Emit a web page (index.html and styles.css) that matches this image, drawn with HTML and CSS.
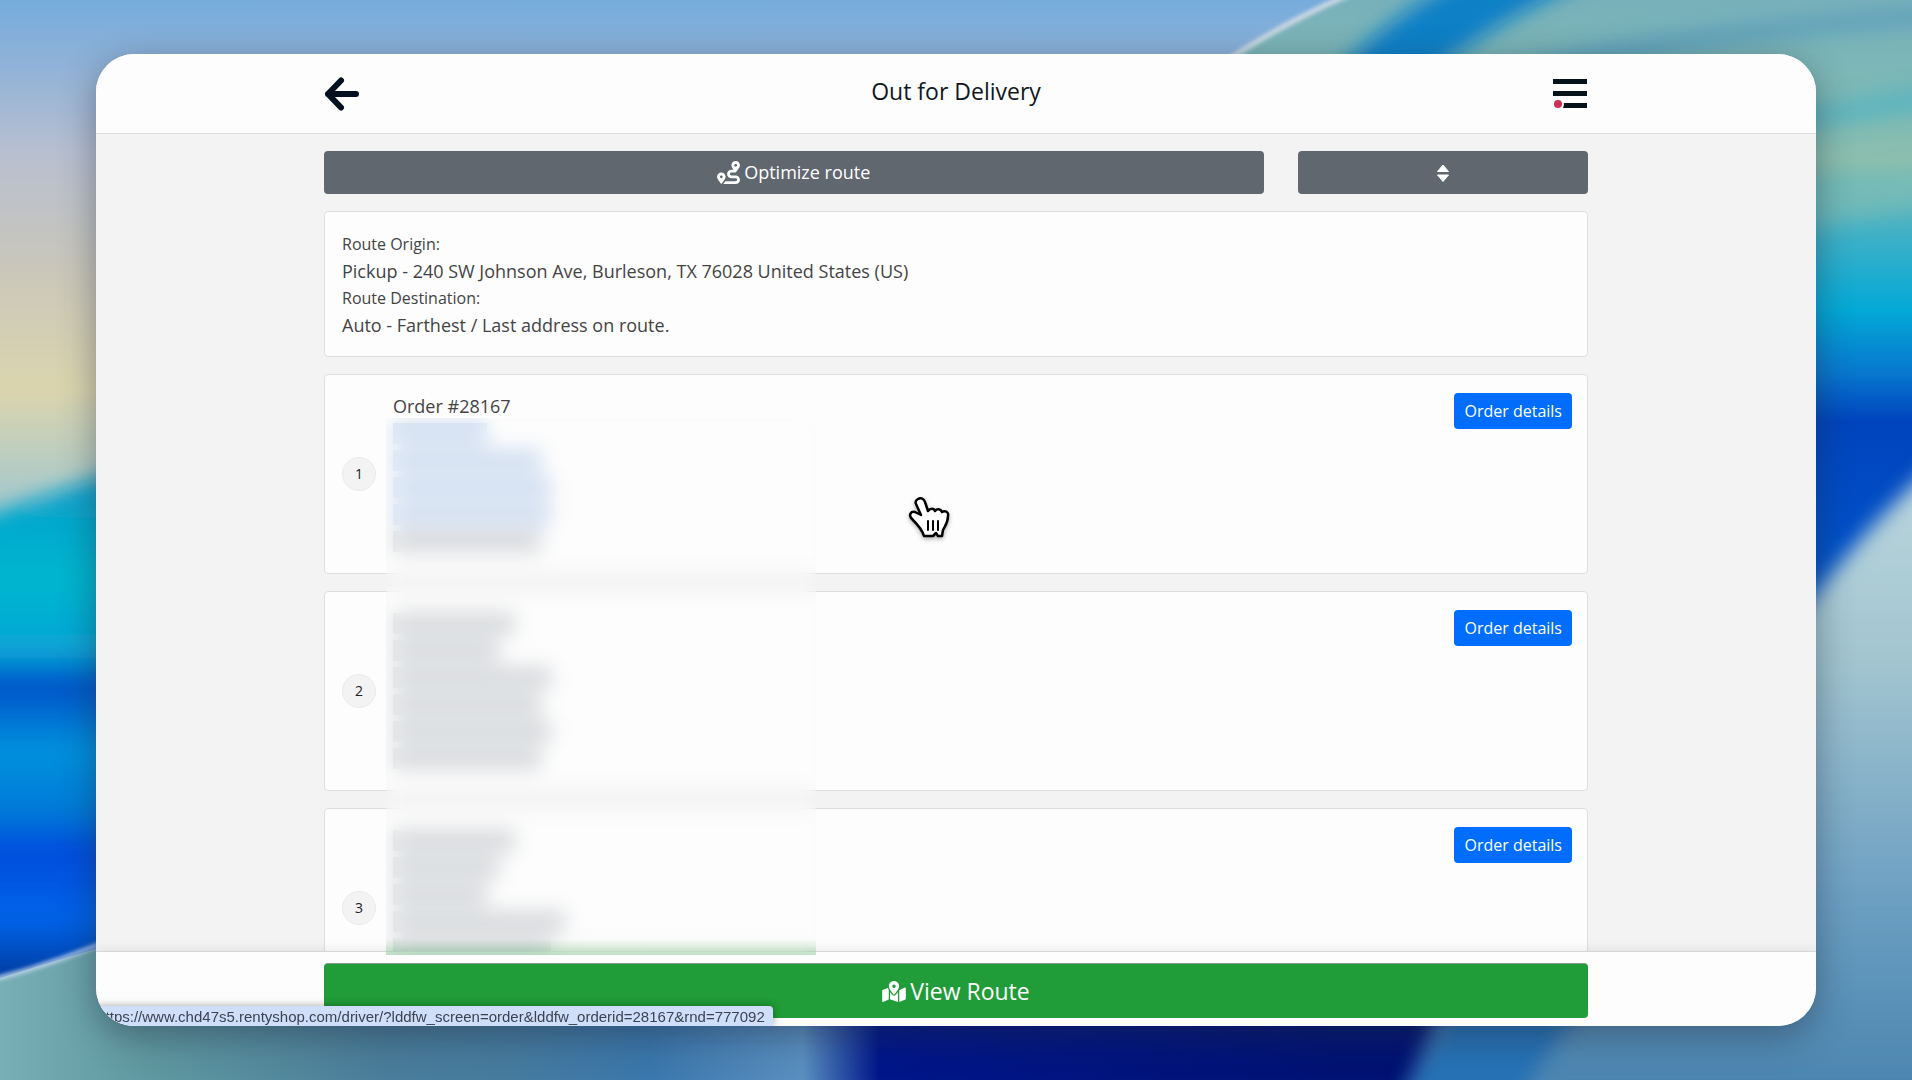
FILE: index.html
```html
<!DOCTYPE html>
<html lang="en">

<head>
    <meta charset="UTF-8">
    <meta name="viewport" content="width=device-width, initial-scale=1.0">
    <title>Out for Delivery</title>
    <link rel="stylesheet" href="styles.css">
</head>

<body>
    <!-- desktop wallpaper -->
    <svg class="wallpaper" viewBox="0 0 1912 1080" preserveAspectRatio="none" aria-hidden="true">
        <defs>
            <linearGradient id="sky" x1="0" y1="0" x2="0" y2="1">
                <stop offset="0" stop-color="#76acdc" />
                <stop offset="0.06" stop-color="#90b2d8" />
                <stop offset="0.14" stop-color="#b7bfd0" />
                <stop offset="0.25" stop-color="#cac7ba" />
                <stop offset="0.36" stop-color="#dbd5ae" />
                <stop offset="0.46" stop-color="#a9c9ca" />
            </linearGradient>
            <linearGradient id="swoosh" x1="0" y1="480" x2="0" y2="980" gradientUnits="userSpaceOnUse">
                <stop offset="0" stop-color="#0a9fcb" />
                <stop offset="0.2" stop-color="#00b6cf" />
                <stop offset="0.34" stop-color="#08a6d6" />
                <stop offset="0.41" stop-color="#0052c9" />
                <stop offset="0.54" stop-color="#0091dd" />
                <stop offset="0.66" stop-color="#007bd8" />
                <stop offset="0.74" stop-color="#004ddd" />
                <stop offset="0.88" stop-color="#0063e8" />
                <stop offset="1" stop-color="#003a9c" />
            </linearGradient>
            <linearGradient id="floor" x1="0" y1="0" x2="1912" y2="0" gradientUnits="userSpaceOnUse">
                <stop offset="0" stop-color="#78aeb5" />
                <stop offset="0.08" stop-color="#5f98a0" />
                <stop offset="0.2" stop-color="#4a7d9a" />
                <stop offset="0.27" stop-color="#467b9f" />
                <stop offset="0.34" stop-color="#3a77ac" />
                <stop offset="0.42" stop-color="#5a8fc0" />
                <stop offset="0.46" stop-color="#00168a" />
                <stop offset="0.7" stop-color="#001273" />
            </linearGradient>
            <linearGradient id="right" x1="0" y1="0" x2="0" y2="620" gradientUnits="userSpaceOnUse">
                <stop offset="0" stop-color="#79b1bb" />
                <stop offset="0.17" stop-color="#7fbab4" />
                <stop offset="0.26" stop-color="#8cbfae" />
                <stop offset="0.36" stop-color="#49b2c4" />
                <stop offset="0.5" stop-color="#03a9d6" />
                <stop offset="0.6" stop-color="#0878cf" />
                <stop offset="0.68" stop-color="#0044bd" />
                <stop offset="1" stop-color="#0058cf" />
            </linearGradient>
            <linearGradient id="pale" x1="0" y1="480" x2="0" y2="1080" gradientUnits="userSpaceOnUse">
                <stop offset="0" stop-color="#bad5dc" />
                <stop offset="0.3" stop-color="#a2c5d0" />
                <stop offset="0.7" stop-color="#6c9fc2" />
                <stop offset="1" stop-color="#4c86b0" />
            </linearGradient>
            <filter id="soft" x="-20%" y="-20%" width="140%" height="140%">
                <feGaussianBlur stdDeviation="10" />
            </filter>
            <filter id="edge" x="-20%" y="-20%" width="140%" height="140%">
                <feGaussianBlur stdDeviation="2" />
            </filter>
        </defs>
        <rect width="1912" height="1080" fill="url(#sky)" />
        <path d="M-40 524 L140 464 L140 1000 L-40 1000Z" fill="url(#swoosh)" filter="url(#soft)" />
        <path d="M0 978 Q90 950 160 930 L1912 930 L1912 1080 L0 1080Z" fill="url(#floor)" />
        <path d="M-5 979 Q60 962 130 932" fill="none" stroke="#c9dcf3" stroke-width="4" filter="url(#edge)" />
        <path d="M1236 54 Q1290 20 1345 -4 L1912 -4 L1912 700 L1700 700 L1700 54Z" fill="url(#right)" />
        <g filter="url(#soft)">
            <path d="M1320 90 Q1390 10 1480 -30 L1610 -30 Q1490 20 1410 90Z" fill="#0a80c6" />
            <path d="M1500 70 Q1620 30 1930 8 L1930 24 Q1680 40 1560 80Z" fill="#5b9fba" />
            <path d="M1800 190 L1930 165 L1930 205 L1800 230Z" fill="#7dbdb5" opacity="0.6" />
            <path d="M1800 110 L1930 85 L1930 110 L1800 130Z" fill="#45b0c6" opacity="0.6" />
            <path d="M1400 1100 Q1440 1020 1460 940 L1780 940 L1780 640 Q1860 530 1940 460 L1940 1100Z" fill="url(#pale)" />
            <path d="M1400 1100 L1450 1010 L1580 1010 L1520 1100Z" fill="#2572b4" />
        </g>
        <path d="M1232 57 Q1290 20 1350 -6" fill="none" stroke="#d3dde6" stroke-width="5" filter="url(#edge)" />
    </svg>

    <div class="desktop">
        <div class="window">
            <header class="topbar">
                <div class="container topbar-row">
                    <a class="icon-link" href="#" aria-label="Back">
                        <svg width="36" height="36" viewBox="0 0 36 36" fill="none" stroke="#04101f" stroke-width="6" stroke-linecap="round" stroke-linejoin="round">
                            <path d="M17 4.500L4 18L17 31.500M4 18H32" />
                        </svg>
                    </a>
                    <h1 class="title">Out for Delivery</h1>
                    <button class="icon-link" type="button" aria-label="Menu">
                        <svg width="36" height="36" viewBox="0 0 36 36">
                            <path d="M1 3h34v5H1zM1 15h34v5H1zM1 27h34v5H1z" fill="#06121a" />
                            <circle cx="5" cy="28" r="7" fill="#fdfdfd" />
                            <circle cx="6" cy="28" r="4" fill="#cf2f52" />
                        </svg>
                    </button>
                </div>
            </header>

            <main class="content">
                <div class="container stack">
                    <div class="actions">
                        <button class="btn btn-gray optimize" type="button">
                            <svg width="23" height="23" viewBox="0 0 512 512" fill="currentColor">
                                <path d="M416 320h-96c-17.600 0-32-14.400-32-32s14.400-32 32-32h96s96-107 96-160-43-96-96-96-96 43-96 96c0 25.500 22.200 63.400 45.300 96H320c-52.900 0-96 43.100-96 96s43.100 96 96 96h96c17.600 0 32 14.400 32 32s-14.400 32-32 32H185.500c-16 24.800-33.800 47.700-47.300 64H416c52.900 0 96-43.100 96-96s-43.100-96-96-96zm0-256c17.700 0 32 14.300 32 32s-14.300 32-32 32-32-14.300-32-32 14.300-32 32-32zM96 256c-53 0-96 43-96 96s96 160 96 160 96-107 96-160-43-96-96-96zm0 128c-17.700 0-32-14.300-32-32s14.300-32 32-32 32 14.300 32 32-14.300 32-32 32z" />
                            </svg>
                            Optimize route
                        </button>
                        <button class="btn btn-gray" type="button" aria-label="Sort">
                            <svg width="14" height="20" viewBox="0 0 14 20" fill="currentColor" stroke="currentColor" stroke-linejoin="round">
                                <path d="M7 2L12.500 8.500H1.500ZM7 18.500L12.500 12H1.500Z" />
                            </svg>
                        </button>
                    </div>

                    <section class="card">
                        <div class="label">Route Origin:</div>
                        <div>Pickup - 240 SW Johnson Ave, Burleson, TX 76028 United States (US)</div>
                        <div class="label">Route Destination:</div>
                        <div>Auto - Farthest / Last address on route.</div>
                    </section>

                    <article class="card order">
                        <span class="num">1</span>
                        <div class="info">
                            <div>Order #28167</div>
                            <i class="bar blue w1"></i>
                            <i class="bar blue w4"></i>
                            <i class="bar blue w5"></i>
                            <i class="bar blue w5"></i>
                            <i class="bar w4"></i>
                        </div>
                        <a class="btn btn-blue" href="#">Order details</a>
                    </article>

                    <article class="card order">
                        <span class="num">2</span>
                        <div class="info">
                            <i class="bar w3"></i>
                            <i class="bar w2"></i>
                            <i class="bar w5"></i>
                            <i class="bar w4"></i>
                            <i class="bar w5"></i>
                            <i class="bar w4"></i>
                        </div>
                        <a class="btn btn-blue" href="#">Order details</a>
                    </article>

                    <article class="card order">
                        <span class="num">3</span>
                        <div class="info">
                            <i class="bar w3"></i>
                            <i class="bar w2"></i>
                            <i class="bar w1"></i>
                            <i class="bar w6"></i>
                            <i class="bar w5"></i>
                            <i class="bar w4"></i>
                        </div>
                        <a class="btn btn-blue" href="#">Order details</a>
                    </article>
                </div>
            </main>

            <footer class="bottombar">
                <div class="container">
                    <button class="btn btn-green" type="button">
                        <svg width="24" height="21" viewBox="0 0 576 512" fill="currentColor">
                            <path d="M288 0c-69.590 0-126 56.410-126 126 0 56.260 82.350 158.800 113.900 196.020 6.390 7.540 17.820 7.540 24.200 0C331.650 284.800 414 182.260 414 126 414 56.410 357.590 0 288 0zm0 168c-23.200 0-42-18.800-42-42s18.800-42 42-42 42 18.800 42 42-18.800 42-42 42zM20.120 215.950A32.006 32.006 0 0 0 0 245.660v250.320c0 11.320 11.430 19.060 21.940 14.860L160 448V214.920c-8.840-15.980-16.070-31.540-21.250-46.420L20.120 215.950zM288 359.670c-14.070 0-27.380-6.180-36.510-16.960-19.660-23.200-40.570-49.620-59.490-76.720v182l192 64V266c-18.920 27.090-39.820 53.520-59.490 76.720-9.130 10.770-22.440 16.950-36.510 16.950zm266.060-198.510L416 224v288l139.880-55.950A31.996 31.996 0 0 0 576 426.340V176.020c0-11.320-11.430-19.060-21.940-14.860z" />
                        </svg>
                        View Route
                    </button>
                </div>
            </footer>

            <!-- hides customer details -->
            <div class="privacy"></div>

            <div class="status">ttps://www.chd47s5.rentyshop.com/driver/?lddfw_screen=order&amp;lddfw_orderid=28167&amp;rnd=777092</div>
        </div>
    </div>

    <svg class="pointer" width="44" height="44" viewBox="0 0 44 44" aria-hidden="true">
        <path d="M11 4C14 2 17 4 18 7L21 16C23 13 27 13 28 16C30 13 34 14 35 17C38 15 42 17 41 21C41 28 38 31 36 35L35 41L31 41L29 38L26 41H17C15 34 10 29 5 24C1 20 4 16 8 17L14 20L9 9C8 7 9 5 11 4Z" fill="#fff" stroke="#000" stroke-width="2.500" stroke-linejoin="round" />
        <path d="M21 26V35M26 26V35M31 26V35" stroke="#000" stroke-width="2" stroke-linecap="round" />
    </svg>
</body>

</html>
```
FILE: styles.css
```css
* {
    box-sizing: border-box;
}

body {
    margin: 0;
    height: 100vh;
    overflow: hidden;
    font-family: "Open Sans", "Noto Sans", sans-serif;
    font-size: 18px;
    line-height: 27px;
    color: #444;
}

.wallpaper {
    position: absolute;
    inset: 0;
    width: 100%;
    height: 100%;
}

.desktop {
    height: 100vh;
    padding: 5vh 5vw;
}

.window {
    position: relative;
    display: flex;
    flex-direction: column;
    height: 100%;
    background: #f3f3f3;
    border-radius: 38px;
    overflow: hidden;
}

/* shadow under the window */
.desktop::before {
    content: "";
    position: absolute;
    inset: 5vh 5vw;
    border-radius: 38px;
    box-shadow: 0 10px 36px rgba(30, 40, 60, 0.45);
}

.container {
    width: 100%;
    max-width: 1264px;
    margin: 0 auto;
}

/* header */
.topbar {
    background: #fdfdfd;
    border-bottom: 1px solid #dcdcdc;
}

.topbar-row {
    display: flex;
    align-items: center;
    justify-content: space-between;
    height: 79px;
}

.title {
    margin: 0;
    padding-bottom: 4px;
    font-size: 23px;
    font-weight: 400;
    color: #10181f;
}

.icon-link {
    display: flex;
    padding: 0;
    border: 0;
    background: none;
}

/* content */
.content {
    flex: 1;
    min-height: 0;
    overflow: hidden;
    padding-top: 17px;
}

.stack {
    display: flex;
    flex-direction: column;
    gap: 17px;
}

.actions {
    display: grid;
    grid-template-columns: repeat(4, 1fr);
    gap: 34px;
}

.optimize {
    grid-column: span 3;
}

.btn {
    display: flex;
    align-items: center;
    justify-content: center;
    gap: 4px;
    border: 0;
    border-radius: 4px;
    font: inherit;
    color: #fff;
    text-decoration: none;
}

.btn-gray {
    height: 43px;
    background: #60676f;
    font-size: 18px;
}

.btn-blue {
    height: 36px;
    padding: 0 10px;
    background: #006dfd;
    font-size: 16px;
}

.btn-green {
    width: 100%;
    height: 55px;
    border-top: 1px solid #8a9a8c;
    background: #209c38;
    font-size: 23px;
}

.card {
    padding: 18px 17px;
    background: #fdfdfd;
    border: 1px solid #dedede;
    border-radius: 4px;
}

.label {
    font-size: 16px;
    line-height: 28px;
}

.label + div {
    line-height: 26px;
}

.order {
    display: flex;
    align-items: flex-start;
    gap: 17px;
    padding: 18px 15px 18px 17px;
}

.num {
    align-self: center;
    width: 34px;
    height: 34px;
    border: 1px solid #ebebeb;
    border-radius: 50%;
    background: #f3f3f3;
    font-size: 14px;
    line-height: 32px;
    text-align: center;
    color: #222;
}

.info {
    flex: 1;
}

.bar {
    display: block;
    height: 21px;
    margin: 3px 0;
    background: #d5d8db;
}

.info .bar + .bar {
    margin-top: 6px;
}

.bar.blue {
    background: #cfddf0;
}

.w1 { width: 94px; }
.w2 { width: 106px; }
.w3 { width: 122px; }
.w4 { width: 148px; }
.w5 { width: 158px; }
.w6 { width: 172px; }

.privacy {
    position: absolute;
    top: 364px;
    bottom: 71px;
    left: calc(50% - 570px);
    width: 430px;
    background: linear-gradient(to top, rgba(60, 170, 85, 0.3), rgba(60, 170, 85, 0) 16px);
    backdrop-filter: blur(10px);
}

/* footer */
.bottombar {
    padding: 11px 0 8px;
    background: #fdfdfd;
    border-top: 1px solid #d6d6d6;
    box-shadow: 0 -2px 10px rgba(0, 0, 0, 0.08);
}

.status {
    position: absolute;
    left: 0;
    bottom: 0;
    height: 20px;
    padding: 0 8px 0 10px;
    border-top-right-radius: 4px;
    background: #cfdffa;
    box-shadow: 0 0 8px rgba(0, 0, 0, 0.35);
    font-family: "Liberation Sans", Arial, sans-serif;
    font-size: 15px;
    line-height: 22px;
    color: #3c4250;
}

.pointer {
    position: absolute;
    left: 907px;
    top: 495px;
    filter: drop-shadow(0 2px 2px rgba(0, 0, 0, 0.3));
}
```
